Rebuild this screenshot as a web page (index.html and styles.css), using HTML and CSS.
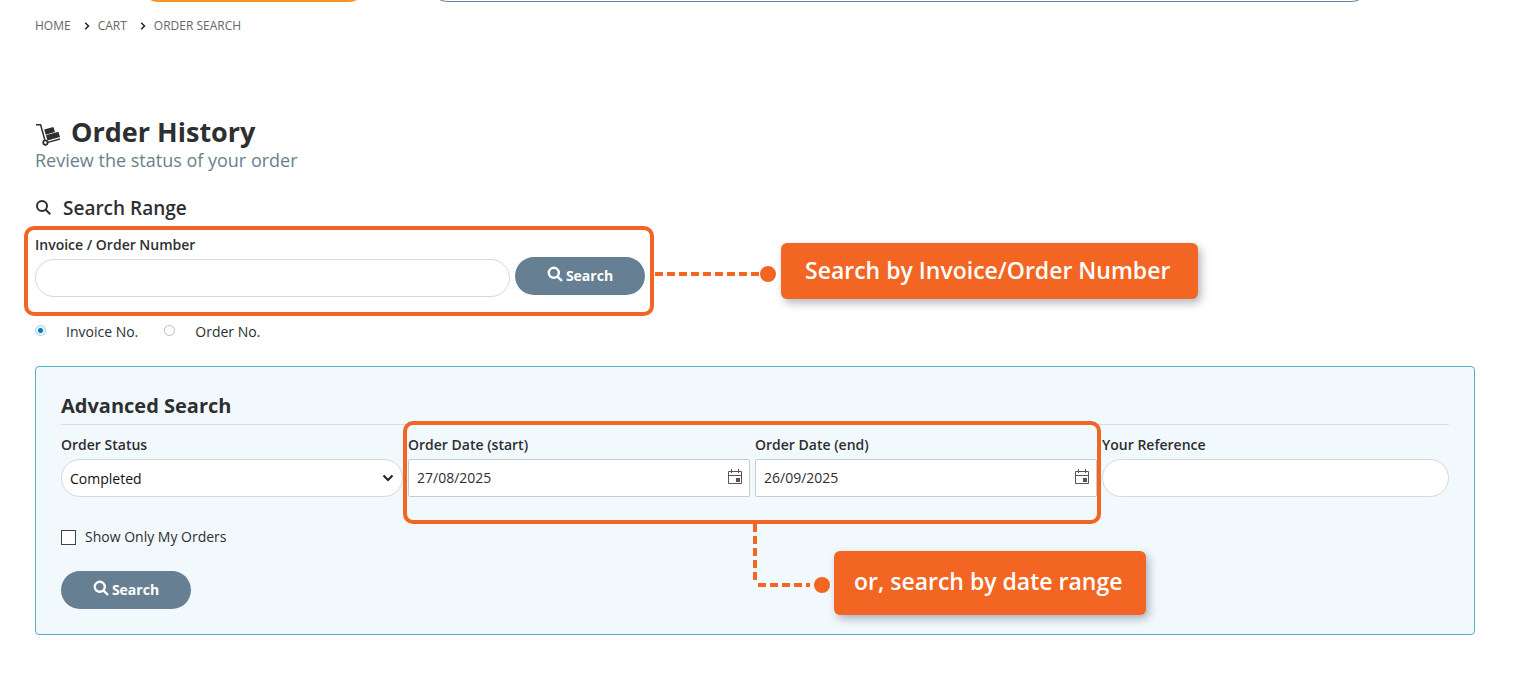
FILE: index.html
```html
<!DOCTYPE html>
<html lang="en">
<head>
  <meta charset="UTF-8">
  <meta name="viewport" content="width=device-width, initial-scale=1.0">
  <title>Order History</title>
  <link rel="stylesheet" href="styles.css">
</head>
<body>
  <header class="site-header">
    <div class="header-logo"></div>
    <div class="header-search"></div>
  </header>

  <main class="page">
    <nav class="breadcrumb" aria-label="Breadcrumb">
      <a href="#">HOME</a>
      <svg class="chevron" viewBox="0 0 6 8"><path d="M1.2 .8 4.5 4 1.2 7.2"/></svg>
      <a href="#">CART</a>
      <svg class="chevron" viewBox="0 0 6 8"><path d="M1.2 .8 4.5 4 1.2 7.2"/></svg>
      <a href="#">ORDER SEARCH</a>
    </nav>

    <div class="title-row">
      <svg class="dolly-icon" viewBox="0 0 26 24">
        <path d="M1 2.7h4.6l4.2 15" fill="none" stroke="#2d2f31" stroke-width="1.5"/>
        <path d="M9.2 7.6 18.4 5l1.6 5-9.3 2.7z"/>
        <path d="M11 13.2 23.4 9.7l1.6 5.4-12.5 3.5z"/>
        <path d="M12.8 20.4 25 17" fill="none" stroke="#2d2f31" stroke-width="1.5"/>
        <circle cx="10.4" cy="20.6" r="2.2" fill="none" stroke="#2d2f31" stroke-width="1.8"/>
      </svg>
      <h1>Order History</h1>
    </div>
    <p class="subtitle">Review the status of your order</p>

    <h2 class="range-title">
      <svg class="search-icon" viewBox="0 0 16 16"><circle cx="7" cy="6" r="5"/><path d="M10.5 9.5 15.3 14.3"/></svg>
      Search Range
    </h2>

    <form class="number-search">
      <label class="field-label" for="orderNumber">Invoice / Order Number</label>
      <div class="number-row">
        <input type="text" id="orderNumber" class="text-input number-input">
        <button type="submit" class="search-btn">
          <svg class="search-icon" viewBox="0 0 16 16"><circle cx="6.8" cy="6.8" r="5"/><path d="M10.3 10.3 15 15"/></svg>
          Search
        </button>
      </div>
      <div class="highlight highlight-number"></div>
      <div class="callout callout-number">
        <svg class="connector" width="126" height="18" viewBox="0 0 126 18">
          <path d="M0 9h106" stroke-dasharray="8 4"/>
          <circle cx="113" cy="9" r="8"/>
        </svg>
        <div class="callout-box">Search by Invoice/Order Number</div>
      </div>
    </form>

    <div class="number-type">
      <input type="radio" id="invoiceNo" name="numberType" checked>
      <label for="invoiceNo">Invoice No.</label>
      <input type="radio" id="orderNo" name="numberType">
      <label for="orderNo">Order No.</label>
    </div>

    <form class="advanced">
      <h3>Advanced Search</h3>
      <div class="field-grid">
        <div class="field">
          <label class="field-label" for="orderStatus">Order Status</label>
          <div class="select-wrap">
            <select id="orderStatus" class="text-input">
              <option>Completed</option>
            </select>
            <svg class="select-arrow" viewBox="0 0 12 8"><path d="M1.5 1.5 6 6l4.5-4.5"/></svg>
          </div>
        </div>
        <div class="date-range">
          <div class="field">
            <label class="field-label" for="dateStart">Order Date (start)</label>
            <div class="date-box">
              <input type="text" id="dateStart" value="27/08/2025">
              <button type="button" aria-label="Open start date calendar">
                <svg viewBox="0 0 16 16"><path d="M1.5 2.5h13v12h-13zM1.5 6.5h13M4.5 0v4M11.5 0v4"/><rect x="9" y="9" width="4" height="4"/></svg>
              </button>
            </div>
          </div>
          <div class="field">
            <label class="field-label" for="dateEnd">Order Date (end)</label>
            <div class="date-box">
              <input type="text" id="dateEnd" value="26/09/2025">
              <button type="button" aria-label="Open end date calendar">
                <svg viewBox="0 0 16 16"><path d="M1.5 2.5h13v12h-13zM1.5 6.5h13M4.5 0v4M11.5 0v4"/><rect x="9" y="9" width="4" height="4"/></svg>
              </button>
            </div>
          </div>
          <div class="highlight highlight-dates"></div>
          <div class="callout callout-dates">
            <svg class="connector" width="82" height="70" viewBox="0 0 82 70">
              <path d="M3 0v56" stroke-dasharray="8 4"/>
              <path d="M6 61h52" stroke-dasharray="8 4"/>
              <circle cx="70" cy="61" r="8"/>
            </svg>
            <div class="callout-box">or, search by date range</div>
          </div>
        </div>
        <div class="field field-last">
          <label class="field-label" for="yourReference">Your Reference</label>
          <input type="text" id="yourReference" class="text-input">
        </div>
      </div>

      <div class="only-mine">
        <input type="checkbox" id="onlyMine">
        <label for="onlyMine">Show Only My Orders</label>
      </div>

      <button type="submit" class="search-btn">
        <svg class="search-icon" viewBox="0 0 16 16"><circle cx="6.8" cy="6.8" r="5"/><path d="M10.3 10.3 15 15"/></svg>
        Search
      </button>
    </form>
  </main>
</body>
</html>
```

FILE: styles.css
```css
/* styles.css */
* {
    box-sizing: border-box;
}

body {
    font-family: "Open Sans", "Noto Sans", sans-serif;
    font-size: 14px;
    line-height: 20px;
    margin: 0;
    color: #2d2f31;
    background-color: #fff;
}

h1, h2, h3, p {
    margin: 0;
}

input, select, button {
    font-family: inherit;
    font-size: 14px;
    margin: 0;
}

/* only the bottom edge of the header stays in view */
.site-header {
    display: flex;
    align-items: flex-end;
    height: 2px;
    padding: 0 145px 0 139px;
    gap: 60px;
    overflow: hidden;
}

.header-logo {
    flex: none;
    width: 229px;
    height: 40px;
    border-radius: 20px;
    background-color: #f7941d;
}

.header-search {
    flex: 1;
    height: 40px;
    border: 1px solid #667f92;
    border-radius: 20px;
}

.page {
    padding: 14px 41px 39px 35px;
}

.breadcrumb {
    display: flex;
    align-items: center;
    font-size: 12px;
}

.breadcrumb a {
    color: #666;
    text-decoration: none;
}

.chevron {
    width: 6px;
    height: 8px;
    margin: 0 8px 0 13px;
    fill: none;
    stroke: #222;
    stroke-width: 1.5;
}

.title-row {
    display: flex;
    align-items: center;
    gap: 10px;
    margin-top: 78px;
}

.dolly-icon {
    width: 26px;
    height: 24px;
    margin-top: 4px;
    fill: #2d2f31;
}

h1 {
    font-size: 27px;
    line-height: 36px;
    font-weight: 700;
}

.subtitle {
    font-size: 18px;
    line-height: 20px;
    color: #6b808c;
}

.range-title {
    display: flex;
    align-items: center;
    gap: 12px;
    margin-top: 24px;
    font-size: 19px;
    line-height: 28px;
    font-weight: 600;
}

.search-icon {
    width: 16px;
    height: 16px;
    fill: none;
    stroke: currentColor;
    stroke-width: 2;
}

.number-search {
    position: relative;
    max-width: 610px;
    margin-top: 13px;
}

.field-label {
    display: block;
    font-weight: 600;
}

.number-row {
    display: flex;
    align-items: flex-start;
    gap: 5px;
    padding-top: 2px;
}

.text-input {
    display: block;
    width: 100%;
    height: 38px;
    padding: 0 8px;
    border: 1px solid #d5d9dc;
    border-radius: 19px;
    background-color: #fff;
    color: #111;
}

.number-input {
    flex: 1;
    margin-top: 2px;
}

.search-btn {
    display: flex;
    align-items: center;
    justify-content: center;
    gap: 3px;
    width: 130px;
    height: 38px;
    padding: 0 0 2px;
    border: none;
    border-radius: 19px;
    background-color: #667f92;
    color: #fff;
    font-weight: 700;
    cursor: pointer;
}

.search-btn .search-icon {
    margin-bottom: 3px;
    stroke-width: 2.4;
}

.number-type {
    display: flex;
    align-items: center;
    margin-top: 25px;
}

.number-type input {
    appearance: none;
    width: 11px;
    height: 11px;
    margin: 0 20px 4px 0;
    border: 1px solid #bbb;
    border-radius: 50%;
    background-color: #fff;
}

.number-type input:checked {
    border-color: #a9d6f0;
    background: radial-gradient(circle, #1673b5 2px, #e2f3fd 3px);
}

.number-type label {
    margin-right: 26px;
}

.advanced {
    margin-top: 24px;
    padding: 25px;
    border: 1px solid #52aec4;
    border-radius: 4px;
    background-color: #f2f9fd;
}

h3 {
    padding-bottom: 4px;
    border-bottom: 1px solid #d3dfe4;
    font-size: 20px;
    line-height: 28px;
    font-weight: 700;
}

.field-grid {
    display: grid;
    grid-template-columns: repeat(4, 1fr);
    margin-top: 10px;
}

.field {
    padding-right: 5px;
}

.field-last {
    padding-right: 0;
}

.field .field-label {
    margin-bottom: 4px;
}

.select-wrap {
    position: relative;
}

select.text-input {
    appearance: none;
}

.select-arrow {
    position: absolute;
    right: 9px;
    top: 15px;
    width: 12px;
    height: 8px;
    fill: none;
    stroke: #222;
    stroke-width: 2;
    pointer-events: none;
}

.date-range {
    position: relative;
    display: grid;
    grid-column: span 2;
    grid-template-columns: 1fr 1fr;
}

.date-box {
    display: flex;
    align-items: center;
    height: 38px;
    padding: 0 6px 2px 8px;
    border: 1px solid #c3cdd3;
    border-radius: 2px;
    background-color: #fff;
}

.date-box input {
    flex: 1;
    min-width: 0;
    padding: 0;
    border: none;
    background: none;
    color: #2d2f31;
}

.date-box button {
    width: 16px;
    height: 16px;
    padding: 0;
    border: none;
    background: none;
    cursor: pointer;
}

.date-box svg {
    display: block;
    width: 16px;
    height: 16px;
    fill: none;
    stroke: #555;
}

.date-box rect {
    fill: #555;
    stroke: none;
}

.only-mine {
    display: flex;
    align-items: center;
    gap: 9px;
    margin: 30px 0 24px;
}

.only-mine input {
    appearance: none;
    width: 15px;
    height: 15px;
    border: 1px solid #444;
    background-color: #fff;
}

/* guide overlays */
.highlight {
    position: absolute;
    border: 4px solid #f26522;
    border-radius: 10px;
    pointer-events: none;
}

.highlight-number {
    top: -9px;
    right: -9px;
    bottom: -19px;
    left: -11px;
}

.highlight-dates {
    top: -14px;
    right: 1px;
    bottom: -27px;
    left: -5px;
}

.callout {
    position: absolute;
    display: flex;
    white-space: nowrap;
}

.callout-number {
    top: 8px;
    left: calc(100% + 10px);
    align-items: center;
}

.callout-number .connector {
    margin-top: 6px;
}

.callout-dates {
    top: 89px;
    left: 50%;
    margin-left: -3px;
}

.connector {
    flex: none;
    fill: #f26522;
}

.connector path {
    fill: none;
    stroke: #f26522;
    stroke-width: 4;
}

.callout-box {
    padding: 13px 28px 15px 24px;
    border-radius: 6px;
    background-color: #f26522;
    box-shadow: 3px 4px 8px rgba(40, 50, 80, 0.35);
    color: #fff;
    font-size: 23px;
    line-height: 28px;
    font-weight: 600;
}

.callout-dates .callout-box {
    margin-top: 27px;
    padding: 16px 24px 20px 20px;
}
```
